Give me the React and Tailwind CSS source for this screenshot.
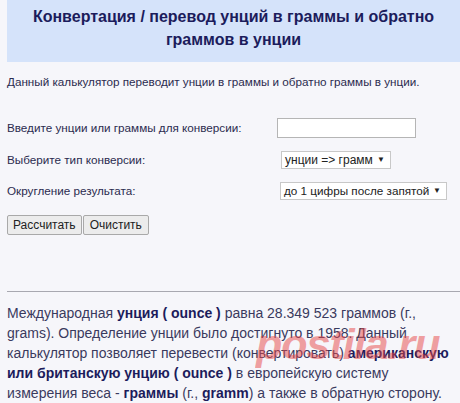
export default function App() {
  return (
    <div className="relative w-[460px] h-[403px] overflow-hidden bg-[#f6f6fa] text-[#2b2b4f]" style={{ fontFamily: '"Liberation Sans", Arial, sans-serif' }}>
      <div className="ml-[7px] h-[62px] bg-[#d5e3fa] pt-[5px] text-center text-[16px] leading-[23px] font-bold text-[#1c1c5c]">
        Конвертация / перевод унций в граммы и обратно<br />граммов в унции
      </div>
      <div className="px-[7px]">
        <p className="mt-[13px] text-[11.7px] leading-[14px] whitespace-nowrap">Данный калькулятор переводит унции в граммы и обратно граммы в унции.</p>
        <div className="mt-[29px] flex items-center h-[20px] text-[11.7px]">
          <span className="w-[270px] whitespace-nowrap">Введите унции или граммы для конверсии:</span>
          <input className="w-[139px] h-[20px] border border-[#b5b5b5] bg-white" />
        </div>
        <div className="mt-[13px] flex items-center h-[18px] text-[11.7px]">
          <span className="w-[274px] whitespace-nowrap">Выберите тип конверсии:</span>
          <div className="w-[110px] h-[18px] border border-[#c8c8c8] bg-white flex items-center justify-between px-[3px] text-[12px] text-[#222] whitespace-nowrap">
            <span>унции =&gt; грамм</span>
            <span className="text-[8px] mr-[2px]">▼</span>
          </div>
        </div>
        <div className="mt-[13px] flex items-center h-[18px] text-[11.7px]">
          <span className="w-[273px] whitespace-nowrap">Округление результата:</span>
          <div className="w-[167px] h-[18px] border border-[#c8c8c8] bg-white flex items-center justify-between pl-[3px] pr-[2px] text-[11.7px] text-[#222] whitespace-nowrap">
            <span>до 1 цифры после запятой</span>
            <span className="text-[8px] mr-[3px]">▼</span>
          </div>
        </div>
        <div className="mt-[15px] flex gap-[1px] text-[12px] text-[#222]">
          <button className="h-[20px] px-[5px] border border-[#a9a9a9] bg-[#ececec] rounded-[2px]">Рассчитать</button>
          <button className="h-[20px] px-[6px] border border-[#a9a9a9] bg-[#ececec] rounded-[2px]">Очистить</button>
        </div>
      </div>
      <div className="ml-[7px] mt-[56px] border-t border-[#a8a8b0]" />
      <p className="px-[7px] mt-[11px] text-[14px] leading-[20px] text-[#3a3a5e]">
        Международная <b className="text-[#1c1c5c]">унция ( ounce )</b> равна 28.349 523 граммов (г., grams). Определение унции было достигнуто в 1958. Данный калькулятор позволяет перевести (конвертировать) <b className="text-[#1c1c5c]">американскую или британскую унцию ( ounce )</b> в европейскую систему измерения веса - <b className="text-[#1c1c5c]">граммы</b> (г., <b className="text-[#1c1c5c]">gramm</b>) а также в обратную сторону.
      </p>
      <div className="absolute left-[256px] top-[322px] text-[43px] leading-[45px] font-bold italic text-[#e84848] opacity-50 tracking-[-1px] pointer-events-none">postila.ru</div>
    </div>
  );
}
